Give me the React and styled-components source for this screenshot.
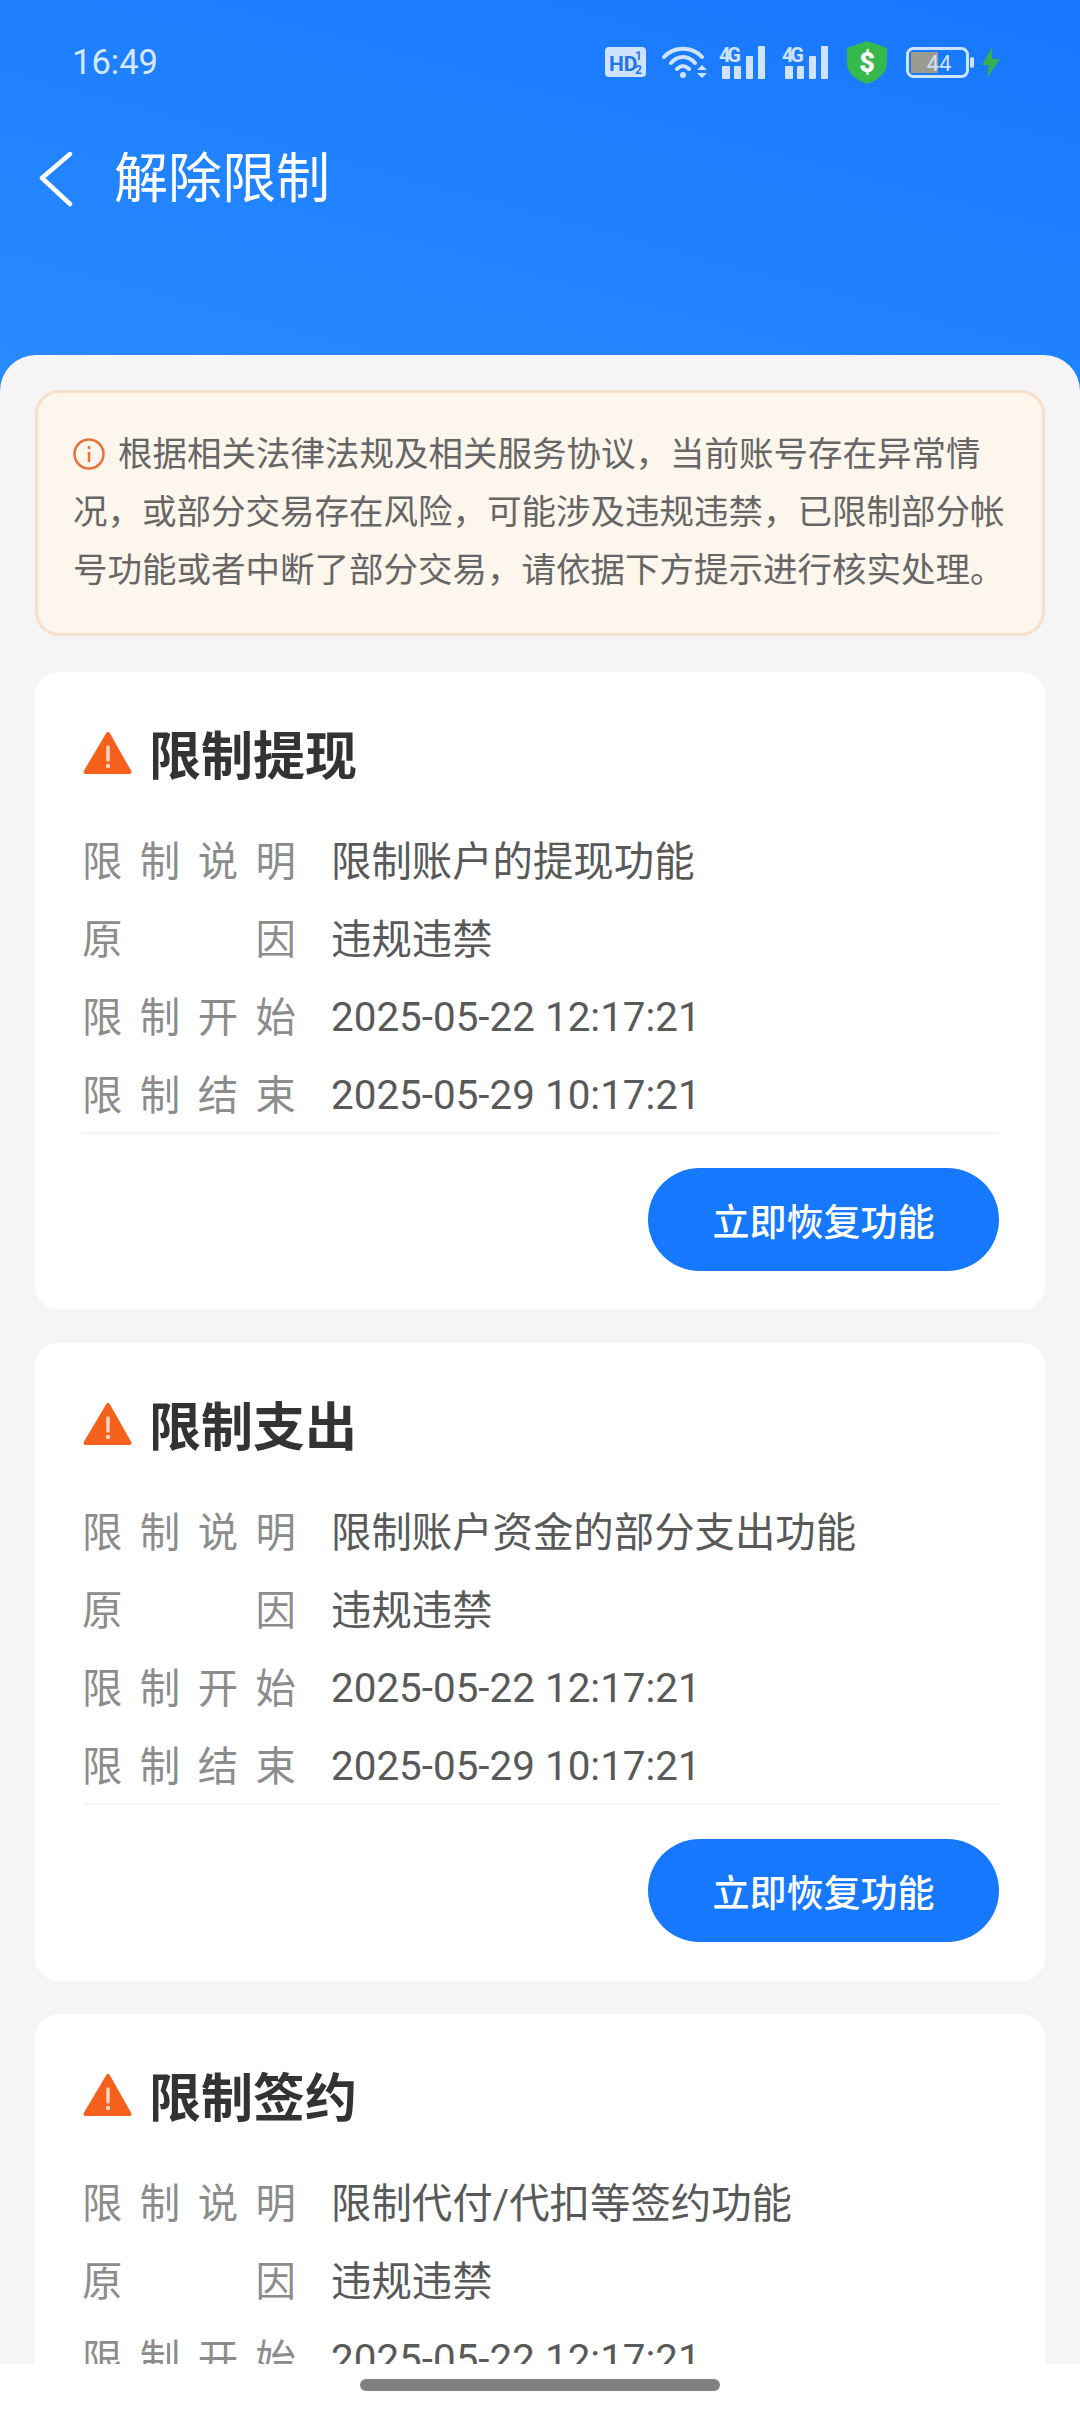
import React from "react";
import styled, { createGlobalStyle } from "styled-components";

const Global = createGlobalStyle`
  html, body { margin: 0; padding: 0; background: #fff; }
  * { box-sizing: border-box; }
  body { font-family: Roboto, "Noto Sans CJK SC", sans-serif; }
`;

const Page = styled.div`
  width: 1080px;
  height: 2412px;
  overflow: hidden;
  display: flex;
  flex-direction: column;
  background: #fff;
`;

const Screen = styled.div`
  height: 2364px;
  overflow: hidden;
  background: linear-gradient(195deg, #1677ff 0, #2a8bff 100%) no-repeat;
  background-size: 100% 400px;
`;

const Header = styled.header`
  height: 355px;
  color: #fff;
`;

const StatusBar = styled.div`
  height: 124px;
  padding: 0 80px 0 72px;
  display: flex;
  align-items: center;
  justify-content: space-between;
`;

const Clock = styled.span`
  font-size: 34.5px;
  color: #d6e8ff;
`;

const StatusIcons = styled.div`
  display: flex;
  align-items: center;
  svg { display: block; }
`;

const StatusSlot = styled.div`
  margin-left: ${(p) => p.$gap || 0}px;
`;

const NavBar = styled.div`
  height: 108px;
  padding: 4px 0 0 38px;
  display: flex;
  align-items: center;
  gap: 40px;
`;

const NavTitle = styled.h1`
  margin: 0;
  font-size: 54px;
  font-weight: 400;
  line-height: 60px;
`;

const Panel = styled.main`
  padding: 35px 35px 0;
  background: #f5f5f5;
  border-radius: 36px 36px 0 0;
  display: flex;
  flex-direction: column;
  gap: 33px;
`;

const Notice = styled.div`
  margin-bottom: 3px;
  height: 246px;
  padding: 32px 30px 0 35px;
  background: #fdf6ed;
  border: 3px solid #f7dfca;
  border-radius: 24px;
  font-size: 34.5px;
  line-height: 58px;
  color: #666;
  svg { vertical-align: -4px; margin-right: 13px; }
`;

const Card = styled.section`
  padding: 48px 46px 39px 47px;
  background: #fff;
  border-radius: 24px;
`;

const CardTitle = styled.h2`
  margin: 0 0 36px;
  height: 66px;
  padding-bottom: 2px;
  display: flex;
  align-items: center;
  gap: 17px;
  font-size: 52px;
  font-weight: 700;
  color: #333;
`;

const Rows = styled.div`
  height: 312px;
  border-bottom: 2px solid #f5f5f5;
`;

const Row = styled.div`
  height: 78px;
  display: flex;
  align-items: center;
  gap: 35px;
  font-size: 40.4px;
`;

// CJK glyphs sit a little low in the Roboto line box
const Label = styled.span`
  width: 214px;
  flex: none;
  padding-bottom: 5px;
  color: #8c8c8c;
  text-align: justify;
  text-align-last: justify;
`;

const Value = styled.span`
  padding-bottom: ${(p) => (p.$date ? 0 : 5)}px;
  color: #595959;
`;

const Actions = styled.div`
  margin-top: 34px;
  display: flex;
  justify-content: flex-end;
`;

const RestoreButton = styled.button`
  width: 351px;
  height: 103px;
  padding: 0;
  border: 0;
  border-radius: 52px;
  background: #1677ff;
  color: #fff;
  font-family: inherit;
  font-size: 37px;
  font-weight: 500;
`;

const BottomBar = styled.div`
  flex: 1;
  display: flex;
  justify-content: center;
  padding-top: 15px;
  background: #fff;
`;

const HomeHandle = styled.div`
  width: 360px;
  height: 12px;
  border-radius: 6px;
  background: #808080;
`;

const iconBlue = "#cfe3ff";

const HdIcon = () => (
  <svg width="41" height="30" viewBox="0 0 41 30">
    <rect width="41" height="30" rx="4" fill={iconBlue} />
    <text x="4" y="24" fontFamily="Roboto" fontWeight="700" fontSize="21" fill="#1f74e6">HD</text>
    <text x="30" y="13" fontFamily="Roboto" fontWeight="700" fontSize="12" fill="#1f74e6">1</text>
    <text x="30" y="27" fontFamily="Roboto" fontWeight="700" fontSize="12" fill="#1f74e6">2</text>
  </svg>
);

const WifiIcon = () => (
  <svg width="46" height="34" viewBox="0 0 46 34" fill="none" stroke={iconBlue} strokeWidth="4" strokeLinecap="round">
    <path d="M2 12C12 1 30 1 40 12" />
    <path d="M9 18C16 10 26 10 33 18" />
    <path d="M15 24C19 20 23 20 27 24" />
    <circle cx="21" cy="30" r="3" fill={iconBlue} stroke="none" />
    <path d="M35 25l5-5 5 5zM35 28l5 5 5-5z" fill={iconBlue} stroke="none" />
  </svg>
);

const SignalIcon = () => (
  <svg width="46" height="34" viewBox="0 0 46 34" fill={iconBlue}>
    <text x="0" y="17" fontFamily="Roboto" fontWeight="700" fontSize="20" textLength="22">4G</text>
    <rect x="3" y="21" width="8" height="13" rx="1" />
    <rect x="15" y="21" width="7" height="13" rx="1" />
    <rect x="27" y="11" width="7" height="23" rx="1" />
    <rect x="39" y="1" width="7" height="33" rx="1" />
  </svg>
);

const ShieldIcon = () => (
  <svg width="40" height="43" viewBox="0 0 40 43">
    <path d="M20 0L40 7V22C40 32 31 39 20 43C9 39 0 32 0 22V7Z" fill="#36b84c" />
    <text x="20" y="31" textAnchor="middle" fontFamily="Roboto" fontWeight="900" fontSize="27" fill="#fff">$</text>
  </svg>
);

const BatteryIcon = () => (
  <svg width="68" height="31" viewBox="0 0 68 31">
    <rect x="1.5" y="1.5" width="60" height="28" rx="6" fill="none" stroke={iconBlue} strokeWidth="3" />
    <rect x="5" y="5" width="27" height="21" fill="#9b9c8f" />
    <rect x="64" y="10" width="4" height="11" rx="2" fill={iconBlue} />
    <text x="33" y="24" textAnchor="middle" fontFamily="Roboto" fontSize="22" fill={iconBlue}>44</text>
  </svg>
);

const BoltIcon = () => (
  <svg width="18" height="31" viewBox="0 0 18 31">
    <path d="M10 0L0 18H7L5 31L18 12H10Z" fill="#36b04a" />
  </svg>
);

const BackIcon = () => (
  <svg width="36" height="56" viewBox="0 0 36 56" fill="none" stroke="#fff" strokeWidth="4.5" strokeLinecap="round" strokeLinejoin="round">
    <path d="M32 2L4 26L32 52" />
  </svg>
);

const InfoIcon = () => (
  <svg width="32" height="32" viewBox="0 0 32 32" fill="none" stroke="#e8743b" strokeWidth="2.5">
    <circle cx="16" cy="16" r="14.5" />
    <path d="M16 14v10" />
    <path d="M16 8v3" />
  </svg>
);

const WarningIcon = () => (
  <svg width="50" height="48" viewBox="0 0 50 48">
    <path d="M26 6L47.5 44H3.5Z" fill="#f5601c" stroke="#f5601c" strokeWidth="4" strokeLinejoin="round" />
    <path d="M26 19v13" stroke="#fbd5bf" strokeWidth="3.5" strokeLinecap="round" />
    <circle cx="26" cy="38" r="2.2" fill="#fbd5bf" />
  </svg>
);

const cards = [
  { title: "限制提现", desc: "限制账户的提现功能" },
  { title: "限制支出", desc: "限制账户资金的部分支出功能" },
  { title: "限制签约", desc: "限制代付/代扣等签约功能" },
];

const RestrictionCard = ({ title, desc }) => (
  <Card>
    <CardTitle>
      <WarningIcon />
      {title}
    </CardTitle>
    <Rows>
      <Row><Label>限 制 说 明</Label><Value>{desc}</Value></Row>
      <Row><Label>原 因</Label><Value>违规违禁</Value></Row>
      <Row><Label>限 制 开 始</Label><Value $date>2025-05-22 12:17:21</Value></Row>
      <Row><Label>限 制 结 束</Label><Value $date>2025-05-29 10:17:21</Value></Row>
    </Rows>
    <Actions>
      <RestoreButton>立即恢复功能</RestoreButton>
    </Actions>
  </Card>
);

export default function App() {
  return (
    <Page>
      <Global />
      <Screen>
        <Header>
          <StatusBar>
            <Clock>16:49</Clock>
            <StatusIcons>
              <HdIcon />
              <StatusSlot $gap={16}><WifiIcon /></StatusSlot>
              <StatusSlot $gap={11}><SignalIcon /></StatusSlot>
              <StatusSlot $gap={17}><SignalIcon /></StatusSlot>
              <StatusSlot $gap={19}><ShieldIcon /></StatusSlot>
              <StatusSlot $gap={19}><BatteryIcon /></StatusSlot>
              <StatusSlot $gap={8}><BoltIcon /></StatusSlot>
            </StatusIcons>
          </StatusBar>
          <NavBar>
            <BackIcon />
            <NavTitle>解除限制</NavTitle>
          </NavBar>
        </Header>
        <Panel>
          <Notice>
            <InfoIcon />
            根据相关法律法规及相关服务协议，当前账号存在异常情况，或部分交易存在风险，可能涉及违规违禁，已限制部分帐号功能或者中断了部分交易，请依据下方提示进行核实处理。
          </Notice>
          {cards.map((c) => (
            <RestrictionCard key={c.title} title={c.title} desc={c.desc} />
          ))}
        </Panel>
      </Screen>
      <BottomBar>
        <HomeHandle />
      </BottomBar>
    </Page>
  );
}
